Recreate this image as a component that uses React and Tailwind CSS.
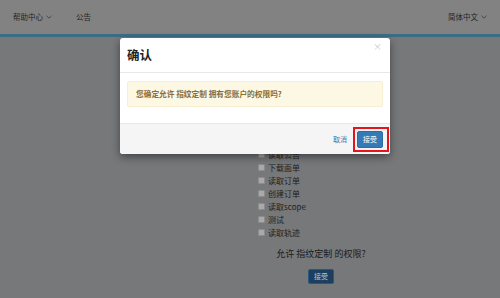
import React from "react";

const cjk = { fontFamily: '"Noto Sans CJK SC", "Noto Sans", sans-serif' };

const scopes = ["读取用户", "读取公告", "下载面单", "读取订单", "创建订单", "读取scope", "测试", "读取轨迹"];

function Chevron() {
  return (
    <svg width="6" height="4" viewBox="0 0 6 4" className="ml-[3px]">
      <path d="M0.5 0.8 L3 3.2 L5.5 0.8" fill="none" stroke="#3a3a3a" strokeWidth="0.8" />
    </svg>
  );
}

export default function App() {
  return (
    <div className="relative w-[500px] h-[298px] overflow-hidden bg-[#76787a]" style={cjk}>
      {/* top nav */}
      <div className="h-[37px] bg-[#828282] border-b-[3px] border-[#3b6e86] flex items-center px-[13px] text-[7.5px] text-[#262626]">
        <span className="flex items-center">帮助中心<Chevron /></span>
        <span className="ml-[24px]">公告</span>
        <span className="ml-auto flex items-center">简体中文<Chevron /></span>
      </div>

      {/* page content behind the modal */}
      <div className="ml-[258px] w-[126px] pt-[98px] flex flex-col">
        {scopes.map((s) => (
          <div key={s} className="h-[13px] flex items-center text-[8px] text-[#1e1e1e]">
            <span className="w-[7px] h-[7px] mr-[3px] border border-[#8c8c8c] bg-[#a9a9a9] rounded-[1px]" />
            {s}
          </div>
        ))}
        <p className="mt-[8px] text-center text-[9px] leading-[14px] text-[#1a1a1a]">允许 指纹定制 的权限?</p>
        <button className="mt-[8px] mx-auto w-[26px] h-[15px] rounded-[2px] bg-[#1d3f5f] border border-[#2c5680] text-[7px] text-[#b8c4d0] flex items-center justify-center">
          接受
        </button>
      </div>

      {/* modal */}
      <div className="absolute left-[120px] top-[38px] w-[270px] bg-white rounded-[3px] shadow-[0_3px_8px_rgba(0,0,0,0.45)]">
        <div className="relative h-[35px] px-[7px] flex items-center border-b border-[#e8e8e8]">
          <h3 className="text-[12.5px] font-bold text-[#222]">确认</h3>
          <span className="absolute right-[8px] top-[4px] text-[9px] text-[#c8c8c8] leading-none">×</span>
        </div>
        <div className="px-[7px] pt-[8px] pb-[16px]">
          <div className="h-[26px] flex items-center pl-[8px] bg-[#fcf8e3] border border-[#f8eed2] rounded-[2px] text-[7.7px] font-bold text-[#8a6d3b]">
            您确定允许 指纹定制 拥有您账户的权限吗?
          </div>
        </div>
        <div className="h-[31px] bg-[#f5f5f5] border-t border-[#e8e8e8] rounded-b-[3px] flex items-center justify-end pr-[7px]">
          <span className="text-[7px] text-[#337ab7] mr-[10px]">取消</span>
          <span className="relative">
            <button className="w-[26px] h-[17px] rounded-[2px] bg-[#337ab7] border border-[#2e6da4] text-[7px] text-white flex items-center justify-center">
              接受
            </button>
            <span className="absolute -left-[4px] -top-[4px] -right-[6px] -bottom-[4px] border-2 border-[#e8141b]" />
          </span>
        </div>
      </div>
    </div>
  );
}
